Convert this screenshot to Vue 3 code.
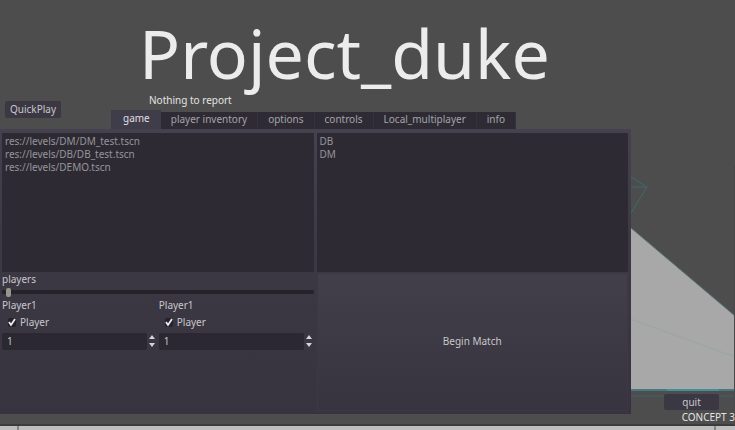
<template>
  <div class="screen">
    <svg class="scene" width="104" height="260" viewBox="0 0 104 260" aria-hidden="true">
      <path d="M0 63 L104 151 V225 H0 Z" fill="#a8a8a8" />
      <path d="M0 63 L104 151" stroke="#59777b" fill="none" />
      <path d="M0 154 L104 192" stroke="#91a3aa" stroke-width=".7" fill="none" />
      <path d="M0 12 L16 22 H0 M16 22 L0 48" stroke="#3d6a70" fill="none" />
      <path d="M0 225 H104" stroke="#477780" stroke-width="2" />
      <path d="M36 225 H88" stroke="#3e909d" stroke-width="2" />
      <path d="M0 231 H104" stroke="#406168" />
      <path d="M103.500 0 V260" stroke="#454749" />
    </svg>

    <header class="header">
      <h1 class="title">Project_duke</h1>
      <div class="toolbar">
        <button type="button" class="quickplay">QuickPlay</button>
        <div>
          <p class="status">Nothing to report</p>
          <nav class="tabs" role="tablist">
            <button
              v-for="tab in tabs"
              :key="tab"
              type="button"
              role="tab"
              class="tab"
              :class="{ active: tab === activeTab }"
              :aria-selected="tab === activeTab"
              @click="activeTab = tab"
            >{{ tab }}</button>
          </nav>
        </div>
      </div>
    </header>

    <main class="main">
      <section class="panel">
        <ul class="list">
          <li v-for="level in levels" :key="level">{{ level }}</li>
        </ul>
        <ul class="list">
          <li v-for="mode in modes" :key="mode">{{ mode }}</li>
        </ul>

        <div class="setup">
          <label for="players">players</label>
          <input id="players" v-model.number="playerCount" class="slider" type="range" min="1" max="16" />
          <div class="players">
            <div v-for="player in players" :key="player.id" class="player">
              <label :for="'team' + player.id">{{ player.name }}</label>
              <label class="check">
                <input v-model="player.human" type="checkbox" />
                <svg width="10" height="10" viewBox="0 0 10 10" aria-hidden="true">
                  <rect x="1" y="1" width="8" height="9" rx="2" fill="#25222b" />
                  <path v-if="player.human" d="M2 5 L4 8 L8 2" stroke="#eee" stroke-width="1.800" fill="none" />
                </svg>
                Player
              </label>
              <div class="spin">
                <input :id="'team' + player.id" v-model.number="player.team" type="text" inputmode="numeric" />
                <div class="arrows">
                  <button type="button" aria-label="Increase" @click="player.team++">
                    <svg width="6" height="5" viewBox="0 0 6 5"><path d="M0 4 L3 0 L6 4 Z" fill="#d4d3d6" /></svg>
                  </button>
                  <button type="button" aria-label="Decrease" @click="player.team--">
                    <svg width="6" height="5" viewBox="0 0 6 5"><path d="M0 1 L3 5 L6 1 Z" fill="#d4d3d6" /></svg>
                  </button>
                </div>
              </div>
            </div>
          </div>
        </div>
        <button type="button" class="begin">Begin Match</button>
      </section>

      <aside class="side">
        <button type="button" class="quit">quit</button>
        <p class="version">CONCEPT 3</p>
      </aside>
    </main>

    <footer class="strip"></footer>
  </div>
</template>

<script setup>
import { ref } from 'vue'

const tabs = ['game', 'player inventory', 'options', 'controls', 'Local_multiplayer', 'info']
const activeTab = ref('game')

const levels = ['res://levels/DM/DM_test.tscn', 'res://levels/DB/DB_test.tscn', 'res://levels/DEMO.tscn']
const modes = ['DB', 'DM']

const playerCount = ref(1)
const players = ref([
  { id: 1, name: 'Player1', human: true, team: 1 },
  { id: 2, name: 'Player1', human: true, team: 1 }
])
</script>

<style>
body {
  margin: 0;
  background: #4d4d4d;
}
</style>

<style scoped>
* {
  box-sizing: border-box;
}

.screen {
  position: relative;
  display: flex;
  flex-direction: column;
  min-height: 100vh;
  overflow: hidden;
  background: #4d4d4d;
  color: #c8c7ca;
  font: 10px/13px "Noto Sans", sans-serif;
}

/* 3d view behind the menu */
.scene {
  position: absolute;
  right: 0;
  bottom: 5px;
}

button,
input {
  margin: 0;
  padding: 0;
  border: 0;
  background: none;
  color: inherit;
  font: inherit;
}

p,
ul,
h1 {
  margin: 0;
  padding: 0;
}

.header {
  position: relative;
}

.title {
  padding: 14px 0 2px 139px;
  color: #ececec;
  font-size: 68px;
  line-height: 78px;
  font-weight: 400;
}

.toolbar {
  display: grid;
  grid-template-columns: 111px 1fr;
}

.quickplay {
  align-self: start;
  justify-self: start;
  margin: 7px 0 0 5px;
  padding: 2px 5px;
  border-radius: 2px;
  background: #3b3844;
}

.status {
  padding-left: 38px;
  color: #e4e4e4;
}

.tabs {
  display: flex;
  align-items: flex-end;
  margin-top: 3px;
}

.tab {
  height: 17px;
  padding: 0 10px 3px;
  border-right: 1px solid #35323d;
  background: #2e2b35;
  color: #a5a4a9;
}

.tab.active {
  height: 19px;
  padding: 0 11px 3px 12px;
  border: 0;
  background: #403d4a;
  color: #e0dfe3;
}

.main {
  position: relative;
  flex: 1;
  display: grid;
  grid-template-columns: 1fr 104px;
}

.panel {
  display: grid;
  grid-template-columns: repeat(2, minmax(0, 1fr));
  grid-template-rows: 1fr 1fr;
  gap: 1px 3px;
  margin-bottom: 10px;
  padding: 4px 3px 3px 2px;
  background: linear-gradient(#45414f, #3c3945 40%, #37343f);
}

.list {
  padding: 2px 3px;
  background: #2d2a33;
  color: #96959a;
  list-style: none;
}

.setup {
  display: flex;
  flex-direction: column;
}

.slider {
  appearance: none;
  width: 100%;
  height: 13px;
  background: linear-gradient(#25222a, #25222a) center / 100% 4px no-repeat;
}

.slider::-webkit-slider-thumb {
  appearance: none;
  width: 5px;
  height: 9px;
  margin-left: 4px;
  border-radius: 2px;
  background: #98958f;
}

.players {
  display: grid;
  grid-template-columns: repeat(2, minmax(0, 1fr));
  gap: 2px;
}

.player {
  display: flex;
  flex-direction: column;
  gap: 4px;
}

.check {
  display: flex;
  align-items: center;
  gap: 3px;
  padding-left: 5px;
}

.check input {
  position: absolute;
  opacity: 0;
}

.spin {
  display: flex;
  gap: 2px;
}

.spin input {
  flex: 1;
  min-width: 0;
  height: 17px;
  padding: 0 5px;
  border-radius: 2px;
  background: #2b2831;
}

.arrows {
  display: flex;
  flex-direction: column;
  justify-content: center;
  gap: 2px;
  width: 8px;
}

.arrows button,
.arrows svg {
  display: block;
  height: 5px;
}

.begin {
  border: 1px solid #3c3945;
  background: linear-gradient(#423f4a, #37343f);
}

.side {
  display: flex;
  flex-direction: column;
  justify-content: flex-end;
}

.quit {
  width: 55px;
  height: 16px;
  margin: 0 0 1px 33px;
  border-radius: 2px;
  background: #3b3844;
}

.version {
  color: #e4e4e4;
  text-align: right;
}

.strip {
  height: 6px;
  border-top: 2px solid #3b3b3b;
  background: linear-gradient(90deg, #bdbdbd 17px, #858585 17px, #858585 19px, #bdbdbd 19px 714px, #858585 714px 716px, #bdbdbd 716px);
}
</style>
